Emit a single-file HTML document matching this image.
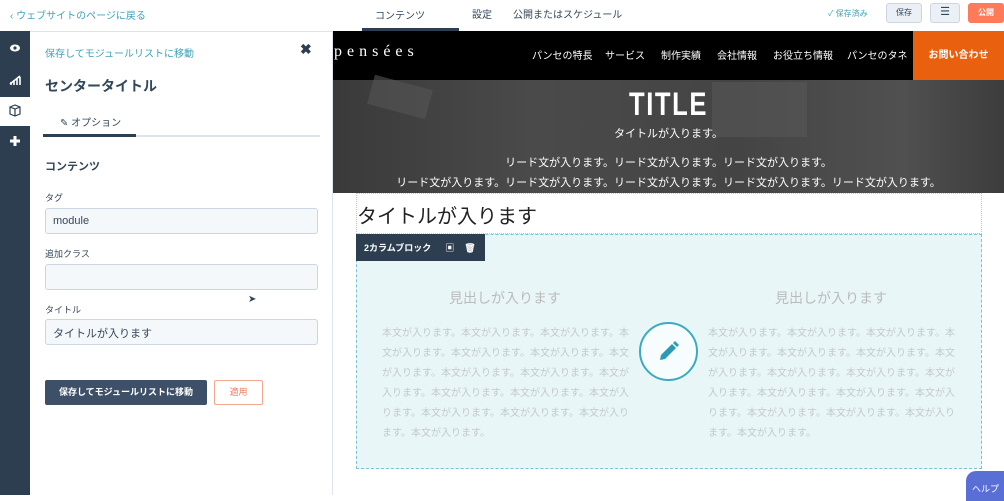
<!DOCTYPE html>
<html><head><meta charset="utf-8"><style>
*{margin:0;padding:0;box-sizing:border-box}
body{width:1004px;height:495px;overflow:hidden;background:#fff;font-family:"Liberation Sans","Noto Sans CJK JP",sans-serif;position:relative;color:#33475b}
.a{position:absolute}
.t{white-space:nowrap}
</style></head><body>
<div class="a t" style="left:10px;top:7px;font-size:10px;color:#3fa1b7">‹ ウェブサイトのページに戻る</div>
<div class="a t" style="left:375px;top:7px;font-size:10px;color:#33475b">コンテンツ</div>
<div class="a" style="left:362px;top:28px;width:97px;height:3px;background:#2d3e50"></div>
<div class="a t" style="left:472px;top:6px;font-size:10px">設定</div>
<div class="a t" style="left:513px;top:6px;font-size:10px">公開またはスケジュール</div>
<div class="a t" style="left:828px;top:8px;font-size:8px;color:#3fa1b7">✓ 保存済み</div>
<div class="a" style="left:886px;top:3px;width:36px;height:20px;background:#eaf0f6;border:1px solid #cbd6e2;border-radius:3px;font-size:8px;text-align:center;line-height:18px">保存</div>
<div class="a" style="left:930px;top:3px;width:30px;height:20px;background:#eaf0f6;border:1px solid #cbd6e2;border-radius:3px;font-size:11px;text-align:center;line-height:17px">☰</div>
<div class="a" style="left:968px;top:3px;width:36px;height:20px;background:#ff7a59;border-radius:3px;font-size:8px;color:#fff;text-align:center;line-height:20px;font-weight:bold">公開</div>
<div class="a" style="left:0;top:31px;width:1004px;height:1px;background:#dfe3eb"></div>
<!-- sidebar -->
<div class="a" style="left:0;top:31px;width:30px;height:464px;background:#2d3e50"></div>
<div class="a" style="left:0;top:97px;width:30px;height:29px;background:#fff"></div>
<svg class="a" style="left:0;top:31px" width="30" height="130">
<ellipse cx="15" cy="17" rx="5" ry="3.5" fill="#fff"/><circle cx="15" cy="17" r="1.6" fill="#2d3e50"/>
<path d="M10 53 L20 45 M11 54v-3 M14 54v-5 M17 54v-7 M20 54v-8" stroke="#fff" stroke-width="1.6"/>
<path d="M10 76 l5-2 5 2v7l-5 2-5-2z M10 76 l5 2 5-2 M15 78v7" stroke="#2d3e50" stroke-width="1.2" fill="none"/>
<path d="M15 105v10 M10 110h10" stroke="#fff" stroke-width="3"/>
</svg>
<!-- panel -->
<div class="a t" style="left:45px;top:45px;font-size:10px;color:#3fa1b7">保存してモジュールリストに移動</div>
<div class="a" style="left:300px;top:41px;font-size:14px;font-weight:bold;color:#2d3e50">✖</div>
<div class="a t" style="left:45px;top:76px;font-size:14px;font-weight:bold;color:#33475b">センタータイトル</div>
<div class="a t" style="left:60px;top:114px;font-size:10px">✎ オプション</div>
<div class="a" style="left:43px;top:135px;width:277px;height:2px;background:#dfe3eb"></div>
<div class="a" style="left:43px;top:134px;width:93px;height:3px;background:#2d3e50"></div>
<div class="a t" style="left:45px;top:158px;font-size:11px;font-weight:bold">コンテンツ</div>
<div class="a t" style="left:45px;top:191px;font-size:9px">タグ</div>
<div class="a" style="left:45px;top:208px;width:273px;height:26px;background:#f5f8fa;border:1px solid #cbd6e2;border-radius:3px;font-size:11px;padding:6px 7px">module</div>
<div class="a t" style="left:45px;top:247px;font-size:9px">追加クラス</div>
<div class="a" style="left:45px;top:264px;width:273px;height:26px;background:#f5f8fa;border:1px solid #cbd6e2;border-radius:3px"></div>
<div class="a t" style="left:45px;top:303px;font-size:9px">タイトル</div>
<div class="a" style="left:45px;top:319px;width:273px;height:26px;background:#f5f8fa;border:1px solid #cbd6e2;border-radius:3px;font-size:11px;padding:5px 7px">タイトルが入ります</div>
<div class="a" style="left:45px;top:380px;width:162px;height:25px;background:#3e5068;border-radius:2px;color:#fff;font-size:9px;font-weight:bold;text-align:center;line-height:25px">保存してモジュールリストに移動</div>
<div class="a" style="left:214px;top:380px;width:49px;height:25px;border:1px solid #f2a88e;border-radius:2px;color:#f07a58;font-size:9px;text-align:center;line-height:23px">適用</div>
<div class="a" style="left:248px;top:294px;font-size:10px">➤</div>
<div class="a" style="left:332px;top:31px;width:1px;height:464px;background:#dfe3eb"></div>
<!-- preview -->
<div class="a" style="left:333px;top:31px;width:671px;height:49px;background:#000"></div>
<div class="a t" style="left:334px;top:43px;font-family:'Liberation Serif',serif;font-size:16px;color:#fff;letter-spacing:5px">pensées</div>
<div class="a t" style="left:532px;top:47px;font-size:10px;color:#fff">パンセの特長</div>
<div class="a t" style="left:605px;top:47px;font-size:10px;color:#fff">サービス</div>
<div class="a t" style="left:661px;top:47px;font-size:10px;color:#fff">制作実績</div>
<div class="a t" style="left:717px;top:47px;font-size:10px;color:#fff">会社情報</div>
<div class="a t" style="left:773px;top:47px;font-size:10px;color:#fff">お役立ち情報</div>
<div class="a t" style="left:847px;top:47px;font-size:10px;color:#fff">パンセのタネ</div>
<div class="a" style="left:913px;top:31px;width:91px;height:49px;background:#e9610f;color:#fff;font-size:10px;font-weight:bold;text-align:center;line-height:49px">お問い合わせ</div>
<div class="a" style="left:333px;top:80px;width:671px;height:113px;background:linear-gradient(90deg,#3a3a3a,#4a4a4a 30%,#444 60%,#505050 85%,#3c3c3c)"></div>
<div class="a" style="left:370px;top:82px;width:60px;height:30px;background:#555;opacity:.6;transform:rotate(15deg)"></div>
<div class="a" style="left:712px;top:82px;width:95px;height:55px;background:#5a5a5a;opacity:.5"></div>
<div class="a t" style="left:333px;top:86px;width:671px;text-align:center;font-size:32px;font-weight:bold;color:#fff;letter-spacing:2px;transform:scaleX(.8)">TITLE</div>
<div class="a t" style="left:333px;top:125px;width:671px;text-align:center;font-size:11px;color:#fff">タイトルが入ります。</div>
<div class="a t" style="left:333px;top:154px;width:671px;text-align:center;font-size:11px;color:#fff">リード文が入ります。リード文が入ります。リード文が入ります。</div>
<div class="a t" style="left:333px;top:174px;width:671px;text-align:center;font-size:11px;color:#fff">リード文が入ります。リード文が入ります。リード文が入ります。リード文が入ります。リード文が入ります。</div>
<div class="a" style="left:356px;top:193px;width:626px;height:41px;border:1px dotted #9fd3dd"></div>
<div class="a t" style="left:357px;top:200px;font-size:20px;color:#222">タイトルが入ります</div>
<div class="a" style="left:356px;top:234px;width:626px;height:235px;background:#e8f6f8;border:1px dashed #7cc3d1"></div>
<div class="a" style="left:356px;top:234px;width:129px;height:27px;background:#2d3e50;color:#fff;font-size:9px;font-weight:bold;padding:7px 8px">2カラムブロック<span style="margin-left:14px">▣</span><span style="margin-left:10px">🗑</span></div>
<div class="a t" style="left:382px;top:288px;width:246px;text-align:center;font-size:14px;color:#bbb">見出しが入ります</div>
<div class="a t" style="left:708px;top:288px;width:246px;text-align:center;font-size:14px;color:#bbb">見出しが入ります</div>
<div class="a" style="left:382px;top:324px;width:248px;font-size:10px;line-height:20px;color:#c4c9cc">本文が入ります。本文が入ります。本文が入ります。本文が入ります。本文が入ります。本文が入ります。本文が入ります。本文が入ります。本文が入ります。本文が入ります。本文が入ります。本文が入ります。本文が入ります。本文が入ります。本文が入ります。本文が入ります。本文が入ります。</div>
<div class="a" style="left:708px;top:324px;width:248px;font-size:10px;line-height:20px;color:#c4c9cc">本文が入ります。本文が入ります。本文が入ります。本文が入ります。本文が入ります。本文が入ります。本文が入ります。本文が入ります。本文が入ります。本文が入ります。本文が入ります。本文が入ります。本文が入ります。本文が入ります。本文が入ります。本文が入ります。本文が入ります。</div>
<div class="a" style="left:639px;top:322px;width:59px;height:59px;border-radius:50%;background:#f7fdfe;border:2px solid #3fa9bf"></div>
<svg class="a" style="left:656px;top:339px" width="25" height="25"><path d="M4 21l1-5L16 5l4 4L9 20z M17 4l2-2 4 4-2 2z" fill="#2a9bb3"/></svg>
<div class="a" style="left:966px;top:471px;width:38px;height:30px;background:#5a6fd6;border-radius:10px 0 0 0;color:#fff;font-size:9px;padding:11px 0 0 6px">ヘルプ</div>
</body></html>
